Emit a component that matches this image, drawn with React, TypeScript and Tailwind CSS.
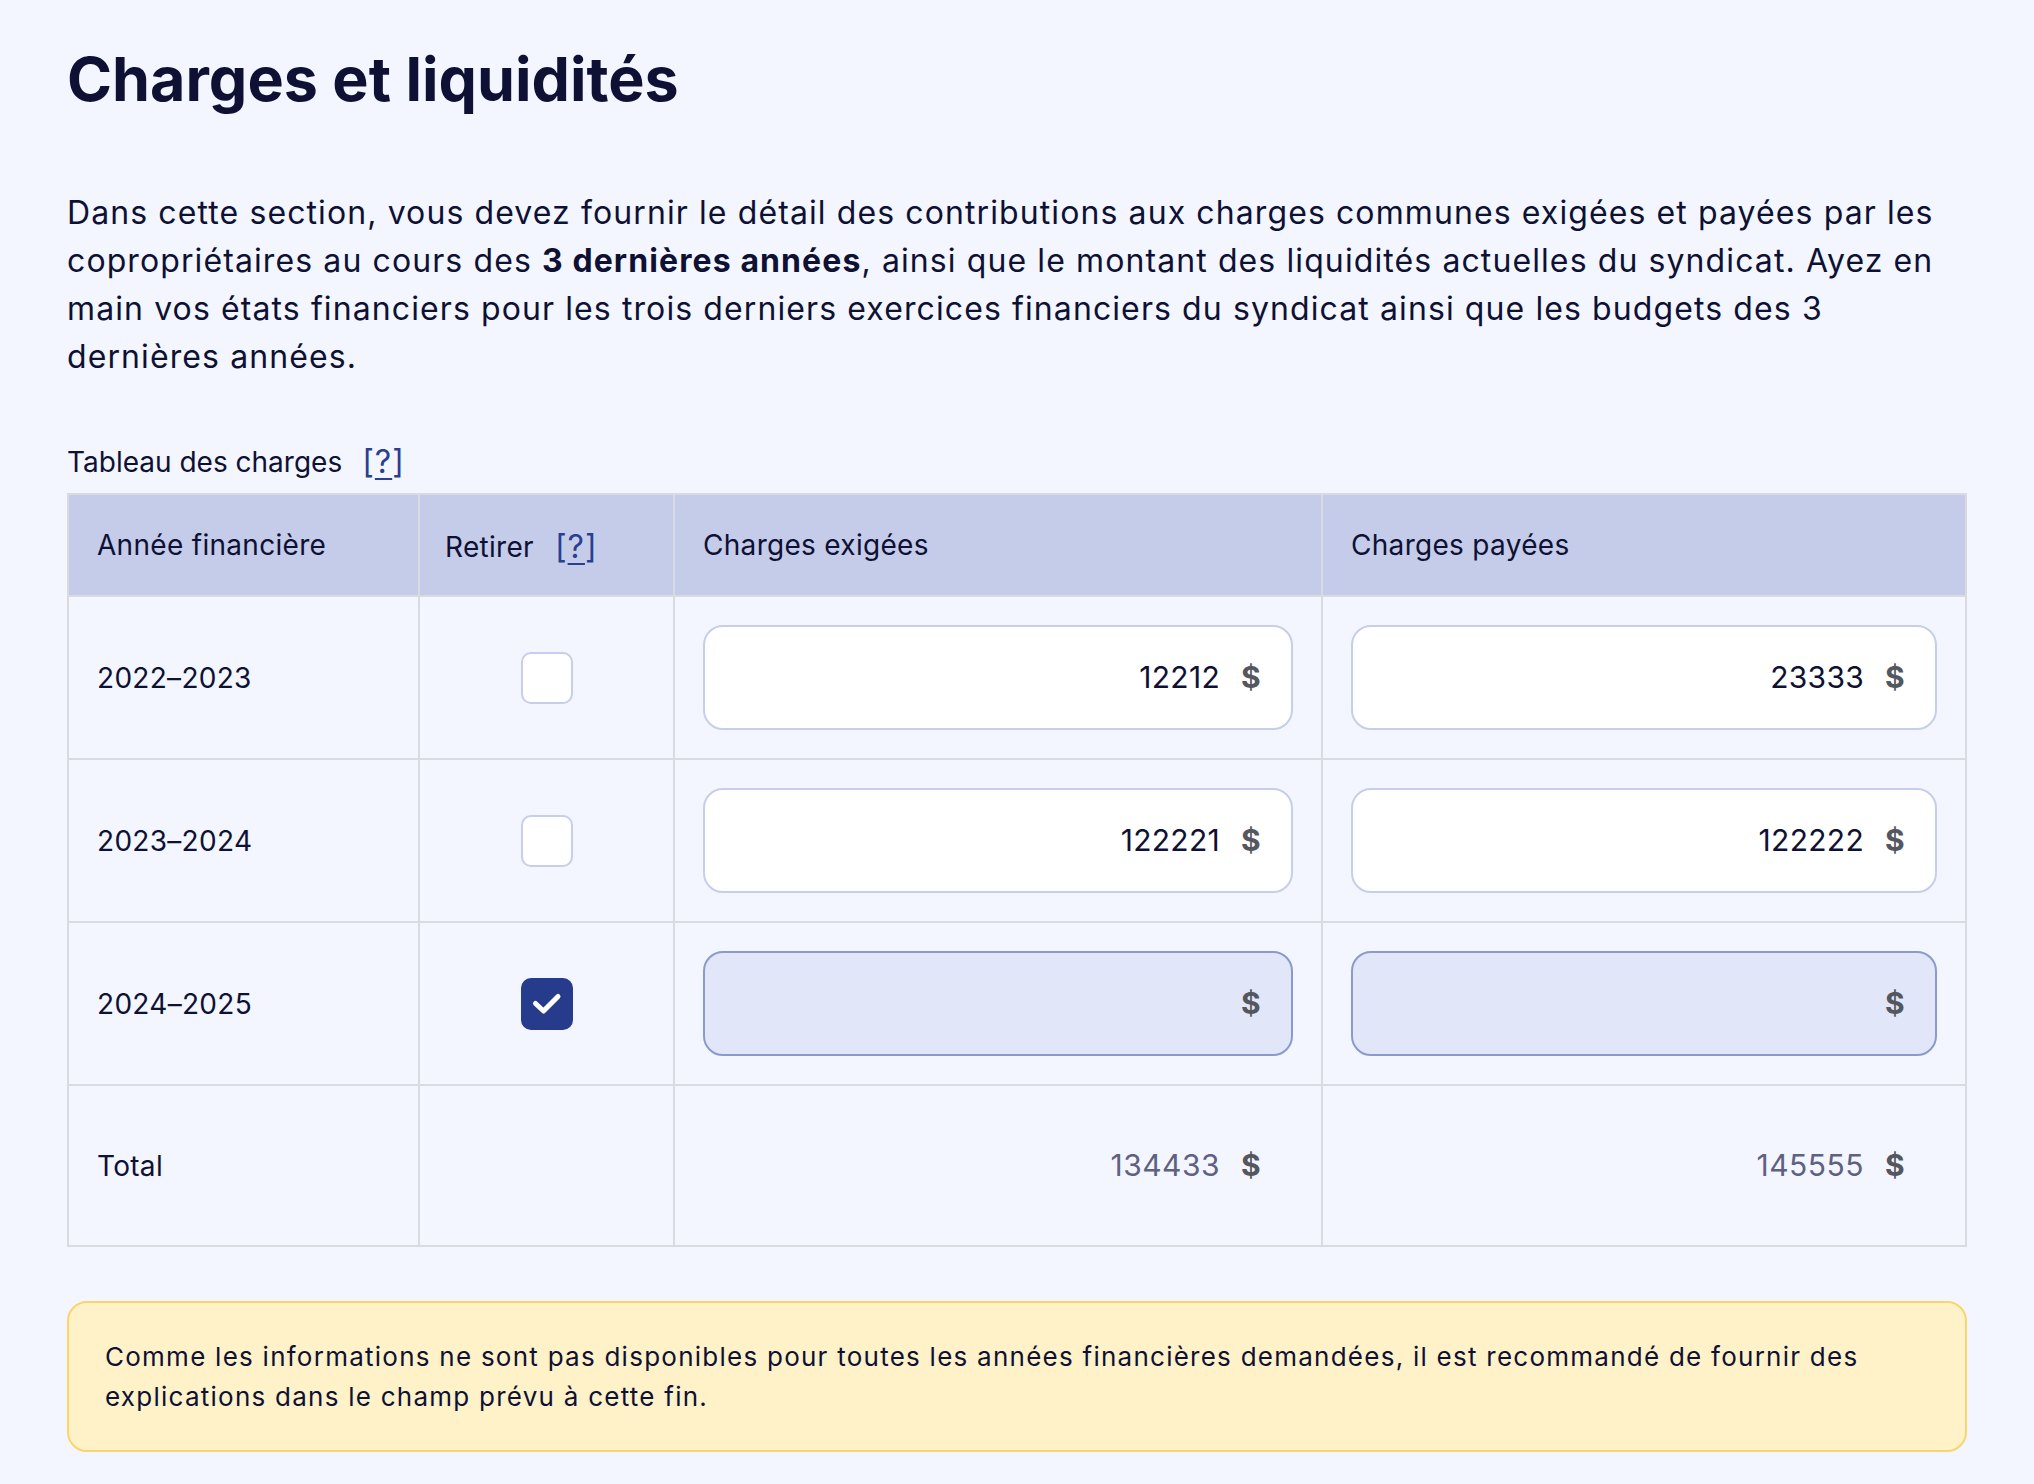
import React, { useState } from 'react';

type Row = { year: string; exigees: string; payees: string; retire: boolean };

const initialRows: Row[] = [
  { year: '2022–2023', exigees: '12212', payees: '23333', retire: false },
  { year: '2023–2024', exigees: '122221', payees: '122222', retire: false },
  { year: '2024–2025', exigees: '', payees: '', retire: true },
];

function HelpLink({ className = '' }: { className?: string }) {
  return (
    <span className={`text-[#2a3f8f] text-[32px] leading-none tracking-[1px] ${className}`}>
      [<span className="underline underline-offset-[5px] decoration-2">?</span>]
    </span>
  );
}

function Checkbox({ checked, onChange }: { checked: boolean; onChange: () => void }) {
  return (
    <button
      type="button"
      onClick={onChange}
      className={`h-[52px] w-[52px] rounded-[10px] flex items-center justify-center ${
        checked ? 'bg-[#263b8c]' : 'bg-white border-2 border-[#c6cee9]'
      }`}
    >
      {checked && (
        <svg viewBox="0 0 52 52" className="h-[52px] w-[52px]" fill="none">
          <path d="M14.5 25.5l8 7.5L37 18.5" stroke="white" strokeWidth="5" strokeLinecap="round" strokeLinejoin="round" />
        </svg>
      )}
    </button>
  );
}

function MoneyInput({ value, disabled, onChange }: { value: string; disabled: boolean; onChange: (v: string) => void }) {
  return (
    <div
      className={`h-[105px] rounded-[20px] border-2 flex items-center pl-6 pr-[30px] gap-[21px] ${
        disabled ? 'bg-[#e1e7f8] border-[#8c9acb]' : 'bg-white border-[#c6cee9]'
      }`}
    >
      <input
        value={value}
        disabled={disabled}
        onChange={e => onChange(e.target.value)}
        className="flex-1 min-w-0 bg-transparent text-right outline-none text-[30px] tracking-[0.3px] text-[#0e1133]"
      />
      <span className="text-[30px] font-bold text-[#55575f]">$</span>
    </div>
  );
}

export default function App() {
  const [rows, setRows] = useState<Row[]>(initialRows);

  const update = (i: number, patch: Partial<Row>) =>
    setRows(rs => rs.map((r, j) => (j === i ? { ...r, ...patch } : r)));

  const totals = { exigees: 134433, payees: 145555 };

  return (
    <div className="min-h-screen bg-[#f3f6ff] font-['Inter',sans-serif] text-[#0e1133] px-[67px] pt-[43px] pb-10">
      <h1 className="text-[61px] font-bold leading-[1.2]">Charges et liquidités</h1>

      <p className="mt-[73px] text-[32px] leading-[48px] tracking-[1.1px]">
        Dans cette section, vous devez fournir le détail des contributions aux charges communes exigées et payées par les
        copropriétaires au cours des <strong className="font-bold">3 dernières années</strong>, ainsi que le montant des
        liquidités actuelles du syndicat. Ayez en main vos états financiers pour les trois derniers exercices financiers du
        syndicat ainsi que les budgets des 3 dernières années.
      </p>

      <div className="mt-[63px] flex items-center gap-[20px] h-[36px] text-[28px]">
        <span>Tableau des charges</span>
        <HelpLink />
      </div>

      <table className="mt-[13px] w-full table-fixed border-collapse text-[28px] tracking-[0.3px]">
        <colgroup>
          <col className="w-[351px]" />
          <col className="w-[255px]" />
          <col className="w-[648px]" />
          <col />
        </colgroup>
        <thead>
          <tr className="bg-[#c4cce9] h-[102px]">
            <th className="border-2 border-[#dadbe0] px-[28px] text-left font-normal">Année financière</th>
            <th className="border-2 border-[#dadbe0] pl-[25px] pr-[20px] text-left font-normal">
              <span className="flex items-center gap-[21px] pt-[4px]">
                Retirer <HelpLink />
              </span>
            </th>
            <th className="border-2 border-[#dadbe0] px-[28px] text-left font-normal">Charges exigées</th>
            <th className="border-2 border-[#dadbe0] px-[28px] text-left font-normal">Charges payées</th>
          </tr>
        </thead>
        <tbody>
          {rows.map((r, i) => (
            <tr key={r.year}>
              <td className="border-2 border-[#dadbe0] px-[28px] py-[28px]">{r.year}</td>
              <td className="border-2 border-[#dadbe0] py-[28px]">
                <div className="flex justify-center">
                  <Checkbox checked={r.retire} onChange={() => update(i, { retire: !r.retire })} />
                </div>
              </td>
              <td className="border-2 border-[#dadbe0] px-[28px] py-[28px]">
                <MoneyInput value={r.retire ? '' : r.exigees} disabled={r.retire} onChange={v => update(i, { exigees: v })} />
              </td>
              <td className="border-2 border-[#dadbe0] px-[28px] py-[28px]">
                <MoneyInput value={r.retire ? '' : r.payees} disabled={r.retire} onChange={v => update(i, { payees: v })} />
              </td>
            </tr>
          ))}
          <tr>
            <td className="border-2 border-[#dadbe0] px-[28px] py-[27px]">Total</td>
            <td className="border-2 border-[#dadbe0]"></td>
            {(['exigees', 'payees'] as const).map(k => (
              <td key={k} className="border-2 border-[#dadbe0] px-[28px] py-[27px]">
                <div className="h-[105px] flex items-center justify-end pr-[32px] gap-[21px] text-[30px]">
                  <span className="text-[#5f6180] tracking-[0.5px]">{totals[k]}</span>
                  <span className="font-bold text-[#55575f]">$</span>
                </div>
              </td>
            ))}
          </tr>
        </tbody>
      </table>

      <div className="mt-[54px] rounded-[20px] border-2 border-[#f8d66c] bg-[#fff2c9] px-[36px] pt-[34px] pb-[33px] text-[26px] leading-[40px] tracking-[1.25px]">
        Comme les informations ne sont pas disponibles pour toutes les années financières demandées, il est recommandé de fournir des
        explications dans le champ prévu à cette fin.
      </div>
    </div>
  );
}
